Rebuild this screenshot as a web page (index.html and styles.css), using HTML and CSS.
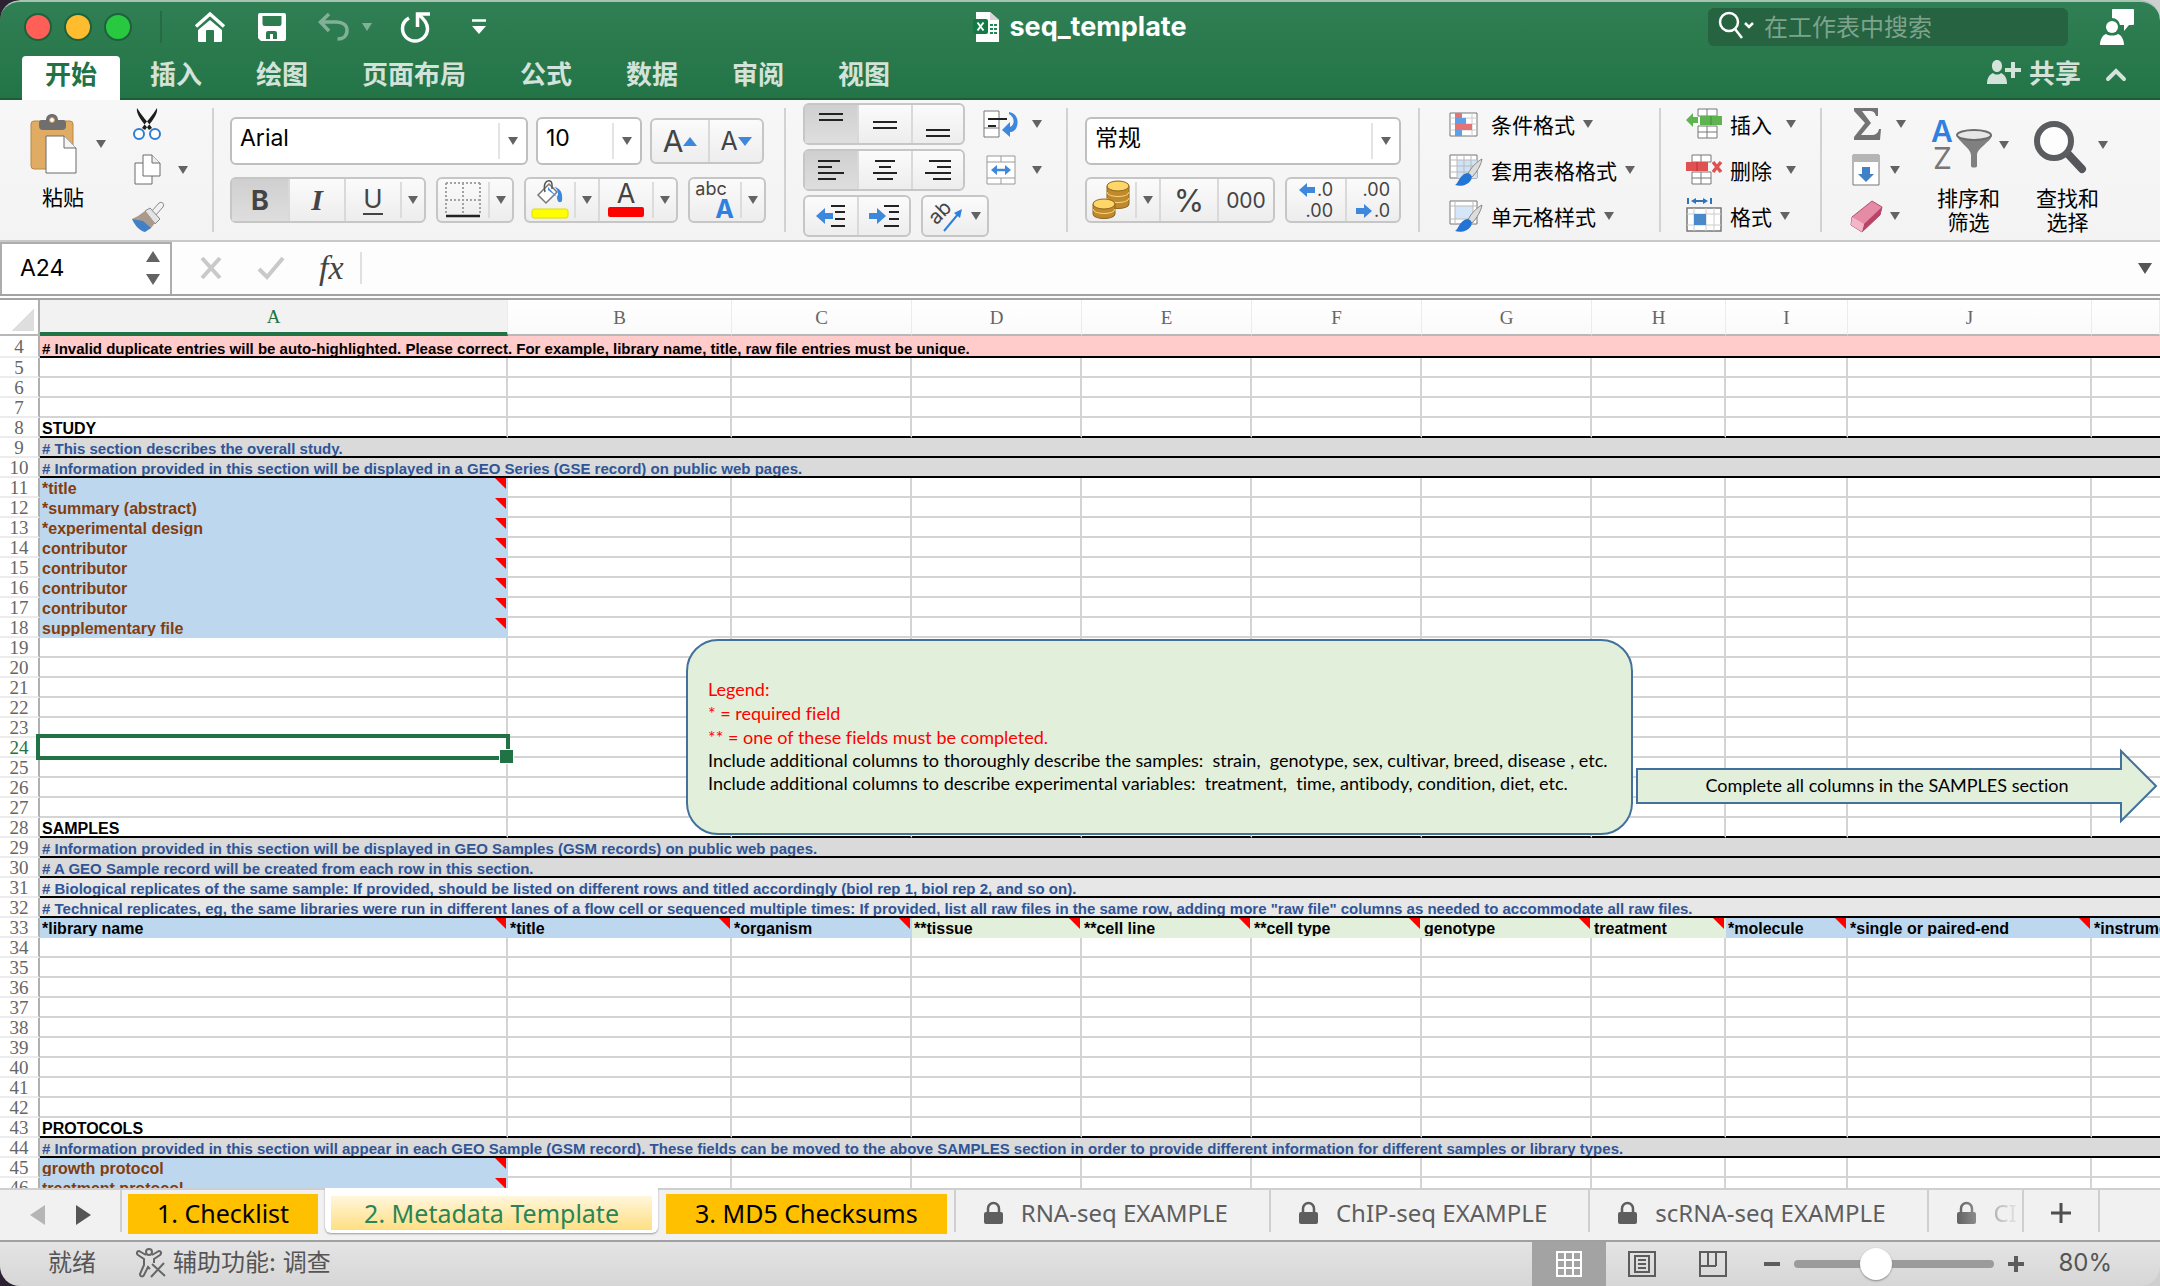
FILE: index.html
```html
<!DOCTYPE html>
<html lang="zh-CN">
<head>
  <meta charset="UTF-8">
  <meta name="viewport" content="width=device-width, initial-scale=1.0">
  <title>seq_template</title>
  <link rel="stylesheet" href="styles.css">
</head>
<body>
  <div class="window">
    <header class="header">
      <div class="titlebar">
        <div class="quick-access">
          <button class="light red" aria-label="关闭"></button>
          <button class="light yellow" aria-label="最小化"></button>
          <button class="light green" aria-label="缩放"></button>
          <span class="title-divider"></span>
          <button aria-label="主页"><svg width="32" height="32" viewBox="0 0 32 32"><path d="M2 15.500 16 3l14 12.500" fill="none" stroke="#fff" stroke-width="3.500"/><path d="M16 9 28 19v10.500a1.500 1.500 0 0 1-1.500 1.500H20V20a1 1 0 0 0-1-1h-6a1 1 0 0 0-1 1v11H5.500A1.500 1.500 0 0 1 4 29.500V19z" fill="#fff"/></svg></button>
          <button aria-label="保存"><svg width="28" height="28" viewBox="0 0 28 28"><path d="M2 0h24a2 2 0 0 1 2 2v24a2 2 0 0 1-2 2H3l-3-3V2a2 2 0 0 1 2-2zm2.500 3v8a2 2 0 0 0 2 2h15a2 2 0 0 0 2-2V3zM8 26h4v-5h3v5h4v-6a2 2 0 0 0-2-2h-7a2 2 0 0 0-2 2z" fill="#fff" fill-rule="evenodd"/></svg></button>
          <button class="undo" aria-label="撤销"><svg width="32" height="30" viewBox="0 0 32 30"><path d="M11 2 2.500 10l8.500 9M3 10h15.500c6 0 10.500 3 10.500 8.500S25 27 19.500 27" fill="none" stroke="#fff" stroke-width="3.500"/></svg><span class="caret"></span></button>
          <button class="redo" aria-label="恢复"><svg width="32" height="32" viewBox="0 0 32 32"><path d="M9 7C4.500 9.500 2.500 13 2.500 17.500c0 7 5.500 12.500 12.500 12.500s12.500-5.500 12.500-12.500c0-5.500-4-10-9-14" fill="none" stroke="#fff" stroke-width="3.500"/><path d="M17.500 16V3H30" fill="none" stroke="#fff" stroke-width="3.500"/></svg></button>
          <button class="customize" aria-label="自定义工具栏"><svg width="14" height="16" viewBox="0 0 14 16"><path d="M0 1.500h14" stroke="#fff" stroke-width="2.500"/><path d="M0 7h14l-7 8z" fill="#fff"/></svg></button>
        </div>
        <h1 class="doc-title">
          <svg width="26" height="30" viewBox="0 0 26 30"><path d="M3 0h14l9 8v22H3z" fill="#fff"/><path d="M17 0v8h9z" fill="#d5d5d5"/><path d="M17 12h3v2h-3zm4 0h3v2h-3zm-4 4h3v2h-3zm4 0h3v2h-3zm-4 4h3v2h-3zm4 0h3v2h-3z" fill="#1c8a4e"/><rect y="7" width="15" height="15" rx="2" fill="#127a43"/><path d="m4.500 10.500 6 8m0-8-6 8" stroke="#fff" stroke-width="2"/></svg>
          seq_template
        </h1>
        <div class="title-right">
          <label class="search">
            <svg width="38" height="32" viewBox="0 0 38 32"><circle cx="11" cy="11" r="9" fill="none" stroke="#fff" stroke-width="2.500"/><path d="m17 18 7 9M27 12l4 4 4-4" fill="none" stroke="#fff" stroke-width="2.500"/></svg>
            <input type="search" placeholder="在工作表中搜索" aria-label="在工作表中搜索">
          </label>
          <button aria-label="账户"><svg width="34" height="36" viewBox="0 0 34 36"><path d="M13 0h20a1 1 0 0 1 1 1v14a1 1 0 0 1-1 1h-4l-5 6v-6h-4A8 8 0 0 0 12 9V1a1 1 0 0 1 1-1z" fill="#fff"/><circle cx="12" cy="18" r="6" fill="#fff"/><path d="M0 36c0-6 3-10 6-11 3 2 9 2 12 0 3 1 6 5 6 11z" fill="#fff"/></svg></button>
        </div>
      </div>
      <nav class="tabs">
        <a class="tab active" href="#home">开始</a>
        <a class="tab" href="#insert">插入</a>
        <a class="tab" href="#draw">绘图</a>
        <a class="tab" href="#layout">页面布局</a>
        <a class="tab" href="#formulas">公式</a>
        <a class="tab" href="#data">数据</a>
        <a class="tab" href="#review">审阅</a>
        <a class="tab" href="#view">视图</a>
        <button class="share"><svg width="34" height="26" viewBox="0 0 34 26"><path d="M10 1c3 0 5 2.500 5 6s-2 6-5 6-5-2.500-5-6 2-6 5-6zM0 25c0-6 2-9 6-11 2 2 6 2 8 0 4 2 6 5 6 11z" fill="#d3e3d9"/><path d="M18 11h16M26 3v16" stroke="#d3e3d9" stroke-width="4"/></svg>共享</button>
        <button class="collapse" aria-label="折叠功能区"><svg width="22" height="14" viewBox="0 0 22 14"><path d="m3 11 8-8 8 8" fill="none" stroke="#d3e3d9" stroke-width="4" stroke-linecap="round"/></svg></button>
      </nav>
    </header>

    <section class="ribbon" aria-label="开始">
      <div class="group clipboard">
        <button class="big paste">
          <span class="icon-row"><svg width="48" height="60" viewBox="0 0 48 60"><rect x="1" y="7" width="42" height="48" rx="3" fill="#e0ab62" stroke="#b98843"/><path d="M11 6h5c0-8 12-8 12 0h5a3 3 0 0 1 3 3v3a4 4 0 0 1-4 4H13a4 4 0 0 1-4-4V9a3 3 0 0 1 2-3z" fill="#6f6f6f"/><circle cx="22" cy="6" r="2.500" fill="#fff" stroke="#c99a55"/><path d="M16 22h18l12 12v25H16z" fill="#fff" stroke="#6b6b6b"/><path d="M34 22v12h12" fill="#f4f4f4" stroke="#6b6b6b"/></svg><span class="caret"></span></span>
          <span class="label">粘贴</span>
        </button>
        <div class="stack">
          <button aria-label="剪切"><svg width="34" height="34" viewBox="0 0 34 34"><path d="M7 1c-1 5 3 11 9 18l3 4 3-2C18 15 11 8 7 1zM27 1c1 5-3 11-9 18l-3 4-3-2C16 15 23 8 27 1z" fill="#1d1d1d"/><circle cx="9" cy="27" r="5" fill="#fff" stroke="#2f7dd0" stroke-width="2"/><circle cx="25" cy="27" r="5" fill="#fff" stroke="#2f7dd0" stroke-width="2"/></svg></button>
          <button aria-label="复制"><svg width="34" height="34" viewBox="0 0 34 34"><path d="M5 10h17v21H5z" fill="#fff" stroke="#6b6b6b"/><path d="M13 2h9l8 8v13H13z" fill="#fff" stroke="#6b6b6b"/><path d="M22 2v8h8" fill="#eee" stroke="#6b6b6b"/></svg><span class="caret"></span></button>
          <button aria-label="格式刷"><svg width="34" height="34" viewBox="0 0 34 34"><path d="m21 13 8-9c3-2 6 1 4 4l-8 9z" fill="#f1f1f1" stroke="#888"/><path d="m15 12 5-3 10 11-5 5z" fill="#e3e3e3" stroke="#888"/><path d="M15 12 8 17l-6 3 13 12 6-3 4-5z" fill="#ab9a8b"/><path d="m2 20 11 2 8 7-6 4c-5-1-10-6-13-13z" fill="#3f80c6"/></svg></button>
        </div>
      </div>
      <span class="divider"></span>

      <div class="group column font-group">
        <div class="row">
          <div class="field font-name"><select aria-label="字体"><option>Arial</option></select><span class="caret"></span></div>
          <div class="field font-size"><select aria-label="字号"><option>10</option></select><span class="caret"></span></div>
          <div class="seg">
            <button class="w56" aria-label="增大字号"><span class="grow">A</span><svg width="14" height="9" viewBox="0 0 14 9"><path d="m0 9 7-9 7 9z" fill="#3d87dc"/></svg></button>
            <button class="w54" aria-label="减小字号"><span class="shrink">A</span><svg width="14" height="9" viewBox="0 0 14 9"><path d="m0 0 7 9 7-9z" fill="#3d87dc"/></svg></button>
          </div>
        </div>
        <div class="row gap10">
          <div class="seg">
            <button class="w56 pressed bold">B</button>
            <button class="w56 italic">I</button>
            <button class="w56 underline"><span>U</span></button>
            <button class="drop" aria-label="下划线选项"><span class="caret"></span></button>
          </div>
          <div class="seg">
            <button class="w50" aria-label="边框"><svg width="36" height="36" viewBox="0 0 36 36"><path d="M1 1h34M1 18h34M1 1v31M18 1v31M35 1v31" stroke="#a2a2a2" stroke-width="2" stroke-dasharray="2 2"/><path d="M1 34h34" stroke="#222" stroke-width="2.500"/></svg></button>
            <button class="drop" aria-label="边框选项"><span class="caret"></span></button>
          </div>
          <div class="seg">
            <button class="w48 raised" aria-label="填充颜色"><svg width="38" height="40" viewBox="0 0 38 40"><path d="M7 17 18 6l8 8-11 11z" fill="#fff" stroke="#777" stroke-width="1.500"/><path d="M14 14c-2-8 1-12 5-11 3 1 2 5 2 8" fill="none" stroke="#555" stroke-width="1.500"/><path d="m17 9 9 10c3-5-1-9-3-10 7 1 9 7 8 14-3 3-5 0-5-4l-9-7z" fill="#3d87dc"/><rect x="1" y="31" width="36" height="9" rx="2" fill="#ff0" stroke="#e0dc00"/></svg></button>
            <button class="drop" aria-label="填充颜色选项"><span class="caret"></span></button>
            <button class="w54 color-a raised" aria-label="字体颜色"><span>A</span><i></i></button>
            <button class="drop" aria-label="字体颜色选项"><span class="caret"></span></button>
          </div>
          <div class="seg">
            <button class="w50 phonetic" aria-label="拼音指南"><span>abc</span><b>A</b></button>
            <button class="drop" aria-label="拼音选项"><span class="caret"></span></button>
          </div>
        </div>
      </div>
      <span class="divider"></span>

      <div class="group column align-group">
        <div class="row gap18">
          <div class="seg small">
            <button class="w52 pressed" aria-label="顶端对齐"><svg width="26" height="30" viewBox="0 0 26 30"><path d="M1 5h24M1 11h24" stroke="#222" stroke-width="2"/></svg></button>
            <button class="w54" aria-label="垂直居中"><svg width="26" height="30" viewBox="0 0 26 30"><path d="M1 13h24M1 19h24" stroke="#222" stroke-width="2"/></svg></button>
            <button class="w52" aria-label="底端对齐"><svg width="26" height="30" viewBox="0 0 26 30"><path d="M1 21h24M1 27h24" stroke="#222" stroke-width="2"/></svg></button>
          </div>
          <button class="with-caret" aria-label="自动换行"><svg width="36" height="34" viewBox="0 0 36 34"><path d="M1 4h15v26H1zM1 21h15" fill="#fff" stroke="#777"/><path d="M5 12h19M5 19h8" stroke="#222" stroke-width="2"/><path d="M26 5c7 1 10 8 8 14-1 4-4 6-7 6v5l-8-7 8-8v5c5-2 5-10-1-13z" fill="#3d87dc"/></svg><span class="caret"></span></button>
        </div>
        <div class="row gap18">
          <div class="seg small">
            <button class="w52 pressed" aria-label="左对齐"><svg width="26" height="22" viewBox="0 0 26 22"><path d="M0 2h22M0 8h14M0 14h26M0 20h18" stroke="#222" stroke-width="2"/></svg></button>
            <button class="w54" aria-label="居中"><svg width="26" height="22" viewBox="0 0 26 22"><path d="M3 2h20M7 8h12M1 14h24M5 20h16" stroke="#222" stroke-width="2"/></svg></button>
            <button class="w52" aria-label="右对齐"><svg width="26" height="22" viewBox="0 0 26 22"><path d="M4 2h22M12 8h14M0 14h26M8 20h18" stroke="#222" stroke-width="2"/></svg></button>
          </div>
          <button class="with-caret" aria-label="合并后居中"><svg width="36" height="30" viewBox="0 0 36 30"><path d="M4 1h28v28H4zM4 7h28M4 23h28M18 1v6M18 23v6" fill="#fff" stroke="#999"/><path d="M13 15h10" stroke="#3d87dc" stroke-width="2.500"/><path d="m8 15 6-5v10zM28 15l-6-5v10z" fill="#3d87dc"/></svg><span class="caret"></span></button>
        </div>
        <div class="row gap10">
          <div class="seg small">
            <button class="w52" aria-label="减少缩进"><svg width="32" height="24" viewBox="0 0 32 24"><path d="M16 2h14M20 8h10M20 15h10M16 22h14" stroke="#222" stroke-width="2"/><path d="m1 12 9-8v5h8v6h-8v5z" fill="#3d87dc"/></svg></button>
            <button class="w52" aria-label="增加缩进"><svg width="32" height="24" viewBox="0 0 32 24"><path d="M16 2h15M21 8h10M21 15h10M16 22h15" stroke="#222" stroke-width="2"/><path d="m18 12-9-8v5H1v6h8v5z" fill="#3d87dc"/></svg></button>
          </div>
          <div class="seg small">
            <button class="w64 with-caret orient" aria-label="方向"><svg width="36" height="34" viewBox="0 0 36 34"><text x="2" y="22" transform="rotate(-45 10 18)" font-size="20" fill="#444">ab</text><path d="m15 32 15-18" stroke="#2f80d8" stroke-width="2"/><path d="m33 10-2 9-6-5z" fill="#2f80d8"/></svg><span class="caret"></span></button>
          </div>
        </div>
      </div>
      <span class="divider"></span>

      <div class="group column number-group">
        <div class="row">
          <div class="field wide"><select aria-label="数字格式"><option>常规</option></select><span class="caret"></span></div>
        </div>
        <div class="row gap10">
          <div class="seg">
            <button class="w48" aria-label="会计数字格式"><svg width="38" height="42" viewBox="0 0 38 42"><g stroke="#8d6420"><path d="M15 7v18c0 6 22 6 22 0V7z" fill="#c08a2c"/><path d="M15 13c0 6 22 6 22 0M15 19c0 6 22 6 22 0" fill="none" stroke="#f6d67c"/><ellipse cx="26" cy="7" rx="11" ry="5" fill="#ffd768"/><path d="M1 25v10c0 6 22 6 22 0V25z" fill="#c08a2c"/><path d="M1 30c0 6 22 6 22 0" fill="none" stroke="#f6d67c"/><ellipse cx="12" cy="25" rx="11" ry="5" fill="#ffd768"/></g></svg></button>
            <button class="drop" aria-label="货币选项"><span class="caret"></span></button>
            <button class="w58 percent">%</button>
            <button class="w56 thousand">000</button>
          </div>
          <div class="seg">
            <button class="w58 decimal"><span><svg width="16" height="14" viewBox="0 0 16 14"><path d="m0 7 8-7v4h8v6H8v4z" fill="#3d87dc"/></svg>.0</span><span>.00</span></button>
            <button class="w54 decimal"><span>.00</span><span><svg width="16" height="14" viewBox="0 0 16 14"><path d="M16 7 8 0v4H0v6h8v4z" fill="#3d87dc"/></svg>.0</span></button>
          </div>
        </div>
      </div>
      <span class="divider"></span>

      <div class="group styles-group">
        <div class="stack">
          <button><svg width="34" height="34" viewBox="0 0 34 34"><path d="M1 6h27v23H1z" fill="#fff" stroke="#777"/><path d="M1 11h27M1 17h27M1 23h27M23 6v23" stroke="#ccc"/><path d="M6 6h7v5H6zM6 17h17v6H6z" fill="#e57373"/><path d="M6 11h11v6H6zM6 23h7v6H6z" fill="#5ba0e8"/></svg>条件格式<span class="caret"></span></button>
          <button><svg width="34" height="34" viewBox="0 0 34 34"><path d="M1 2h27v23H1z" fill="#fff" stroke="#777"/><path d="M8 7h20v18H8z" fill="#cfe2f6"/><path d="M1 7h27M1 13h27M1 19h27M8 2v23M15 2v23M22 2v23" stroke="#bbb"/><path d="M33 6C27 9 21 16 19 21l4 3c5-5 9-12 10-18z" fill="#ddd" stroke="#888"/><path d="M18 20c4 0 6 4 4 7-3 5-10 7-16 5 4-2 4-10 12-12z" fill="#2474d6"/></svg>套用表格格式<span class="caret"></span></button>
          <button><svg width="34" height="34" viewBox="0 0 34 34"><path d="M1 2h27v23H1z" fill="#fff" stroke="#777"/><path d="M6 7h18v13H6z" fill="#d5e6f8"/><path d="M1 7h27M1 20h27M6 2v23M24 2v23" stroke="#bbb"/><path d="M33 6C27 9 21 16 19 21l4 3c5-5 9-12 10-18z" fill="#ddd" stroke="#888"/><path d="M18 20c4 0 6 4 4 7-3 5-10 7-16 5 4-2 4-10 12-12z" fill="#2474d6"/></svg>单元格样式<span class="caret"></span></button>
        </div>
      </div>
      <span class="divider"></span>

      <div class="group cells-group">
        <div class="stack">
          <button><svg width="36" height="34" viewBox="0 0 36 34"><path d="M12 2h19v7H12zM12 19h19v12H12zM21 2v7M21 19v12M12 25h19" fill="#fff" stroke="#777"/><path d="M14 9h22v9H14zM0 13l7-7v4h5v6H7v4z" fill="#5fb350"/><path d="M25 9v9" stroke="#3e9130"/></svg>插入<span class="caret far"></span></button>
          <button><svg width="36" height="34" viewBox="0 0 36 34"><path d="M6 2h19v7H6zM6 19h19v12H6zM15 2v7M15 19v12M6 25h19" fill="#fff" stroke="#777"/><path d="M0 9h22v9H0z" fill="#e05252"/><path d="M11 9v9" stroke="#b83232"/><path d="m27 9 8 10m0-10-8 10" stroke="#e05252" stroke-width="3.500"/></svg>删除<span class="caret far"></span></button>
          <button><svg width="36" height="36" viewBox="0 0 36 36"><path d="M2 0v6M25 0v6M8 3h12" stroke="#2d74b8" stroke-width="2"/><path d="m5 3 5-3v6zM22 3l-5-3v6z" fill="#2d74b8"/><path d="M1 10h34v23H1z" fill="#fff" stroke="#777" stroke-width="1.500"/><path d="M1 16h34M1 27h34M8 10v23M20 10v23M28 10v23" stroke="#ccc"/><path d="M8 16h12v11H8z" fill="#4a8acb"/></svg>格式<span class="caret"></span></button>
        </div>
      </div>
      <span class="divider"></span>

      <div class="group edit-group">
        <div class="stack">
          <button aria-label="自动求和"><svg width="32" height="34" viewBox="0 0 32 34"><path d="M4 1h24v8h-2c-1-4-3-5-7-5h-7l9 12-10 12h10c5 0 7-2 8-6h2l-1 11H4v-3l11-14L4 4z" fill="#737373"/></svg><span class="caret far"></span></button>
          <button aria-label="填充"><svg width="32" height="32" viewBox="0 0 32 32"><path d="M3 1h26v30H3z" fill="#fff" stroke="#777"/><path d="M3 1h26v7H3z" fill="#b5b5b5"/><path d="M12 13h8v7h4l-8 8-8-8h4z" fill="#3f80c6"/></svg><span class="caret"></span></button>
          <button aria-label="清除"><svg width="32" height="34" viewBox="0 0 32 34"><path d="M22 2 32 8l-2 8-18 17L1 26l1-8z" fill="#e58ba5" stroke="#b34d6c"/><path d="m12 33 2-8L32 8l-2 8z" fill="#b9446a"/><path d="m2 18 12 7-2 8-11-7z" fill="#f3b6c6"/></svg><span class="caret"></span></button>
        </div>
        <button class="big sort">
          <span class="icon-row"><svg width="62" height="60" viewBox="0 0 62 60"><text x="0" y="27" font-size="30" font-weight="600" fill="#2f80e0">A</text><text x="2" y="54" font-size="30" fill="#777">Z</text><path d="M26 20c0 6 14 13 14 20v11c0 2 6 2 6 0V40c0-7 15-14 15-20z" fill="#808080"/><ellipse cx="43" cy="20" rx="17" ry="5" fill="#e6e6e6" stroke="#6c6c6c" stroke-width="2"/></svg><span class="caret"></span></span>
          <span class="label">排序和<br>筛选</span>
        </button>
        <button class="big find">
          <span class="icon-row"><svg width="52" height="60" viewBox="0 0 52 60"><path d="m34 39 14 15" stroke="#55565a" stroke-width="8" stroke-linecap="round"/><circle cx="20" cy="26" r="17" fill="#fdfdfd" stroke="#5b5c60" stroke-width="6"/></svg><span class="caret"></span></span>
          <span class="label">查找和<br>选择</span>
        </button>
      </div>
    </section>

    <section class="formula-bar">
      <div class="name-box">
        <input type="text" value="A24" aria-label="名称框">
        <span class="spin"><i class="up"></i><i class="down"></i></span>
      </div>
      <button aria-label="取消"><svg width="24" height="24" viewBox="0 0 24 24"><path d="m3 2 18 20M21 2 3 22" stroke="#c9c9c9" stroke-width="4"/></svg></button>
      <button aria-label="输入"><svg width="28" height="24" viewBox="0 0 28 24"><path d="m2 13 8 8L26 2" fill="none" stroke="#c9c9c9" stroke-width="4"/></svg></button>
      <button class="fx"><i>fx</i></button>
      <input class="formula" type="text" aria-label="编辑栏">
      <button class="expand" aria-label="展开编辑栏"></button>
    </section>

    <main class="sheet">
      <table class="grid">
        <colgroup>
          <col class="c-head"><col class="c-a"><col class="c-b"><col class="c-c"><col class="c-mid"><col class="c-mid"><col class="c-mid"><col class="c-mid"><col class="c-h"><col class="c-i"><col class="c-j"><col>
        </colgroup>
        <thead>
          <tr>
            <th class="corner"></th>
            <th scope="col" class="current">A</th>
            <th scope="col">B</th>
            <th scope="col">C</th>
            <th scope="col">D</th>
            <th scope="col">E</th>
            <th scope="col">F</th>
            <th scope="col">G</th>
            <th scope="col">H</th>
            <th scope="col">I</th>
            <th scope="col">J</th>
            <th scope="col"></th>
          </tr>
        </thead>
        <tbody id="rows"></tbody>
      </table>

      <div class="legend">
        <p class="required">Legend:</p>
        <p class="required">* = required field</p>
        <p class="required">** = one of these fields must be completed.</p>
        <p>Include additional columns to thoroughly describe the samples:&nbsp; strain,&nbsp; genotype, sex, cultivar, breed, disease , etc.</p>
        <p>Include additional columns to describe experimental variables:&nbsp; treatment,&nbsp; time, antibody, condition, diet, etc.</p>
      </div>
      <div class="arrow">
        <svg width="522" height="74" viewBox="0 0 522 74"><path d="M1 20h484V2l35 35-35 35V54H1z" fill="#e2efda" stroke="#41719c" stroke-width="2"/></svg>
        <p>Complete all columns in the SAMPLES section</p>
      </div>
    </main>

    <nav class="sheet-tabs">
      <div class="scroll">
        <button class="prev" aria-label="上一张"></button>
        <button class="next" aria-label="下一张"></button>
      </div>
      <button class="sheet-tab colored">1. Checklist</button>
      <button class="sheet-tab selected"><span>2. Metadata Template</span></button>
      <button class="sheet-tab colored">3. MD5 Checksums</button>
      <button class="sheet-tab locked"><svg width="19" height="22" viewBox="0 0 19 22"><path d="M4 11V6.500a5.500 5.500 0 0 1 11 0V11" fill="none" stroke="#5e5e5e" stroke-width="2.500"/><rect y="10" width="19" height="12" rx="2" fill="#5e5e5e"/></svg>RNA-seq EXAMPLE</button>
      <button class="sheet-tab locked"><svg width="19" height="22" viewBox="0 0 19 22"><path d="M4 11V6.500a5.500 5.500 0 0 1 11 0V11" fill="none" stroke="#5e5e5e" stroke-width="2.500"/><rect y="10" width="19" height="12" rx="2" fill="#5e5e5e"/></svg>ChIP-seq EXAMPLE</button>
      <button class="sheet-tab locked"><svg width="19" height="22" viewBox="0 0 19 22"><path d="M4 11V6.500a5.500 5.500 0 0 1 11 0V11" fill="none" stroke="#5e5e5e" stroke-width="2.500"/><rect y="10" width="19" height="12" rx="2" fill="#5e5e5e"/></svg>scRNA-seq EXAMPLE</button>
      <button class="sheet-tab locked fading"><svg width="19" height="22" viewBox="0 0 19 22"><path d="M4 11V6.500a5.500 5.500 0 0 1 11 0V11" fill="none" stroke="#5e5e5e" stroke-width="2.500"/><rect y="10" width="19" height="12" rx="2" fill="#5e5e5e"/></svg>CI</button>
      <button class="add-sheet" aria-label="插入工作表"><svg width="20" height="20" viewBox="0 0 20 20"><path d="M0 10h20M10 0v20" stroke="#4f4f4f" stroke-width="3"/></svg></button>
    </nav>

    <footer class="status">
      <span>就绪</span>
      <button class="a11y"><svg width="30" height="30" viewBox="0 0 30 30"><g fill="none" stroke="#666" stroke-width="2"><circle cx="13" cy="4" r="3"/><path d="M10 7 3 3C1 3 0 5 2 7l6 4v6L4 26c0 3 3 3 4 1l4-8 2 2M16 7l7-4c2 0 3 2 1 4l-6 4v4M16 16l13 12M28 15 15 29"/></g></svg>辅助功能: 调查</button>
      <div class="views">
        <button class="view on" aria-label="普通"><svg width="26" height="26" viewBox="0 0 26 26"><path d="M1 1h24v24H1zM9 1v24M17 1v24M1 9h24M1 17h24" fill="none" stroke="#fff" stroke-width="2"/></svg></button>
        <button class="view" aria-label="页面布局"><svg width="28" height="26" viewBox="0 0 28 26"><path d="M1 1h26v24H1zM7 5h14v16H7zM10 9h8M10 13h8M10 17h8" fill="none" stroke="#5c5c5c" stroke-width="2"/></svg></button>
        <button class="view" aria-label="分页预览"><svg width="28" height="26" viewBox="0 0 28 26"><path d="M1 1h26v24H1zM9 1v14M17 1v14M1 15h16" fill="none" stroke="#5c5c5c" stroke-width="2"/></svg></button>
      </div>
      <button class="zoom-step" aria-label="缩小"><svg width="16" height="16" viewBox="0 0 16 16"><path d="M0 8h16" stroke="#5c5c5c" stroke-width="4"/></svg></button>
      <input class="zoom" type="range" min="0" max="100" value="39" aria-label="显示比例">
      <button class="zoom-step" aria-label="放大"><svg width="16" height="16" viewBox="0 0 16 16"><path d="M0 8h16M8 0v16" stroke="#5c5c5c" stroke-width="4"/></svg></button>
      <span class="percent-label">80%</span>
    </footer>
  </div>
  <script src="script.js"></script>
</body>
</html>
```
FILE: styles.css
```css
* {
  box-sizing: border-box;
}

body {
  margin: 0;
  height: 100vh;
  overflow: hidden;
  background: linear-gradient(90deg, #2b2133 0, #2b2133 30px, #cfcfcf 60px);
  font-family: Inter, "Noto Sans CJK SC", sans-serif;
  color: #000;
}

button,
input,
select {
  font: inherit;
  color: inherit;
  background: none;
  border: 0;
  padding: 0;
  margin: 0;
}

svg {
  display: block;
  flex: none;
  overflow: visible;
}

.window {
  display: flex;
  flex-direction: column;
  height: 100%;
  border-radius: 20px;
  overflow: hidden;
}

/* Title bar and tabs */
.header {
  height: 100px;
  border-top: 2px solid #a5c4b2;
  border-radius: 20px 20px 0 0;
  background: linear-gradient(#317f54, #227447);
  box-shadow: inset 0 -2px #1b5e38;
}

.titlebar {
  display: grid;
  grid-template-columns: 1fr auto 1fr;
  height: 50px;
  align-items: center;
}

.quick-access {
  display: flex;
  align-items: center;
  padding-left: 26px;
}

.light {
  width: 24px;
  height: 24px;
  border-radius: 50%;
  margin-right: 16px;
  box-shadow: 0 0 0 2px rgba(20, 80, 45, 0.6);
}

.red { background: #ff5f57; }
.yellow { background: #febc2e; }
.green { background: #28c840; }

.title-divider {
  width: 2px;
  height: 32px;
  margin-right: 32px;
  background: #276b45;
  margin-left: 14px;
}

.quick-access button + button:not(.light) {
  margin-left: 32px;
}

.undo {
  display: flex;
  align-items: center;
  gap: 12px;
  opacity: 0.4;
}

.quick-access button.redo:not(.light) {
  margin-left: 28px;
}

.quick-access button.customize:not(.light) {
  margin-left: 40px;
}

.undo .caret {
  border-top-color: #fff;
}

.doc-title {
  display: flex;
  align-items: center;
  gap: 10px;
  margin: 0;
  font-size: 27px;
  font-weight: 700;
  line-height: 34px;
  color: #fff;
}

.title-right {
  display: flex;
  justify-content: flex-end;
  align-items: center;
  gap: 32px;
  padding-right: 26px;
}

.search {
  display: flex;
  align-items: center;
  gap: 8px;
  width: 360px;
  height: 38px;
  padding: 0 10px;
  border-radius: 6px;
  background: #266341;
}

.search input {
  flex: 1;
  min-width: 0;
  font-size: 24px;
  outline: 0;
}

.search input::placeholder {
  color: #7da38d;
}

.tabs {
  display: flex;
  align-items: flex-end;
  height: 48px;
  padding-left: 22px;
}

.tab {
  height: 44px;
  padding: 0 27px;
  line-height: 38px;
  font-size: 26px;
  font-weight: 700;
  color: #d3e3d9;
  text-decoration: none;
}

.tab.active {
  margin-right: 3px;
  padding: 0 23px;
  border-radius: 4px 4px 0 0;
  background: #fff;
  color: #217346;
}

.share {
  display: flex;
  align-items: center;
  gap: 8px;
  height: 44px;
  margin-left: auto;
  padding-bottom: 13px;
  font-size: 26px;
  font-weight: 700;
  color: #d3e3d9;
}

.collapse {
  height: 44px;
  padding: 0 33px 6px 24px;
}

/* Ribbon */
.ribbon {
  display: flex;
  align-items: center;
  height: 142px;
  border-bottom: 2px solid #c8c8c8;
  background: linear-gradient(#f7f7f7, #f3f3f3);
  font-size: 21px;
}

.divider {
  flex: none;
  width: 2px;
  height: 124px;
  background: #d2d2d2;
}

.group {
  display: flex;
  height: 140px;
}

.column {
  flex-direction: column;
  justify-content: center;
  gap: 12px;
}

.row {
  display: flex;
  align-items: center;
  gap: 8px;
}

.gap10 { gap: 10px; }
.gap18 { gap: 18px; }

.caret {
  flex: none;
  width: 10px;
  height: 8px;
  border: 5px solid transparent;
  border-top: 8px solid #636363;
  border-bottom: 0;
}

.clipboard {
  gap: 24px;
  padding: 0 24px 0 30px;
}

.font-group { padding: 0 18px 0 16px; }
.number-group { padding: 0 17px; }
.styles-group { padding: 0 24px 0 29px; }
.cells-group { padding: 0 24px 0 25px; }

.align-group {
  gap: 4px;
  padding: 0 24px 0 17px;
}

.edit-group {
  gap: 25px;
  padding-left: 28px;
}

.stack {
  display: flex;
  flex-direction: column;
  justify-content: center;
}

.stack button {
  display: flex;
  align-items: center;
  gap: 8px;
  height: 46px;
}

.stack .caret.far {
  margin-left: 6px;
}

.clipboard .stack button {
  gap: 14px;
}

.big {
  display: flex;
  flex-direction: column;
  align-items: flex-start;
  gap: 12px;
  padding-top: 14px;
}

.icon-row {
  display: flex;
  align-items: center;
  gap: 6px;
}

.big .label {
  padding-left: 6px;
  line-height: 24px;
}

.sort,
.find {
  padding-top: 15px;
}

.paste .icon-row { gap: 18px; }
.paste .label { padding-left: 12px; }
.find .icon-row { gap: 12px; }
.find .label { padding-left: 2px; }

.field {
  position: relative;
  height: 48px;
  border: 2px solid #bfbfbf;
  border-radius: 6px;
  background: #fff;
}

.field select {
  appearance: none;
  width: 100%;
  height: 38px;
  padding-left: 8px;
  font-size: 23px;
}

.field::after {
  content: "";
  position: absolute;
  top: 4px;
  right: 26px;
  width: 2px;
  height: 36px;
  background: #e4e4e4;
}

.field .caret {
  position: absolute;
  top: 18px;
  right: 8px;
}

.font-name { width: 298px; }
.font-size { width: 106px; }
.wide { width: 316px; }

.seg {
  display: flex;
  height: 46px;
  border: 2px solid #c6c6c6;
  border-radius: 6px;
  background: linear-gradient(#fbfbfb, #ededed);
}

.seg.small {
  height: 42px;
}

.seg button {
  display: flex;
  align-items: center;
  justify-content: center;
  color: #444;
}

.seg button + button:not(.drop) {
  border-left: 2px solid #d9d9d9;
}

.seg .pressed {
  background: linear-gradient(#cfcfcf, #dedede);
}

.seg .drop {
  align-self: center;
  width: 24px;
  height: 36px;
  border-left: 2px solid #dcdcdc;
}

.seg .raised {
  padding-bottom: 4px;
}

.w48 { width: 48px; }
.w50 { width: 50px; }
.w52 { width: 52px; }
.w54 { width: 54px; }
.w56 { width: 56px; }
.w58 { width: 58px; }
.w64 { width: 64px; }

.grow { font-size: 30px; }
.shrink { font-size: 25px; }

.seg .bold {
  font-size: 27px;
  font-weight: 700;
}

.seg .italic {
  font-family: "Liberation Serif", serif;
  font-style: italic;
  font-weight: 700;
  font-size: 30px;
}

.underline span {
  font-size: 26px;
  line-height: 28px;
  border-bottom: 2px solid #444;
}

.seg .color-a,
.seg .phonetic,
.seg .decimal {
  flex-direction: column;
}

.color-a span {
  font-size: 27px;
  line-height: 27px;
}

.color-a i {
  width: 36px;
  height: 10px;
  border-radius: 2px;
  background: #f00;
}

.phonetic span {
  font-size: 18px;
  line-height: 18px;
  padding-right: 8px;
}

.phonetic b {
  align-self: flex-end;
  padding-right: 6px;
  font-size: 25px;
  line-height: 22px;
  color: #2f80e0;
}

.with-caret {
  display: flex;
  align-items: center;
  gap: 13px;
}

.seg .orient {
  gap: 6px;
}

.seg .percent { font-size: 31px; }
.seg .thousand { font-size: 21px; }

.decimal span {
  display: flex;
  align-items: center;
  justify-content: flex-end;
  gap: 2px;
  width: 34px;
  font-size: 18px;
  line-height: 21px;
}

/* Formula bar */
.formula-bar {
  display: flex;
  align-items: center;
  height: 58px;
  border-bottom: 6px double #a3a3a3;
  background: #fdfdfd;
}

.name-box {
  display: flex;
  align-items: center;
  width: 172px;
  height: 52px;
  margin-right: 27px;
  padding: 0 10px 2px 18px;
  border: 2px solid #adadad;
  border-bottom: 0;
  background: #fff;
}

.name-box input {
  flex: 1;
  min-width: 0;
  font-size: 23px;
}

.spin {
  display: flex;
  flex-direction: column;
  gap: 12px;
}

.spin i {
  border: 7px solid transparent;
}

.spin .up {
  border-top: 0;
  border-bottom: 11px solid #636363;
}

.spin .down {
  border-bottom: 0;
  border-top: 11px solid #636363;
}

.formula-bar > button + button {
  margin-left: 34px;
}

.fx {
  padding-right: 16px;
  border-right: 2px solid #e0e0e0;
  font-family: "Liberation Serif", serif;
  font-size: 34px;
  line-height: 32px;
  color: #444;
}

.formula {
  flex: 1;
  font-size: 23px;
  padding-left: 14px;
}

.expand {
  width: 14px;
  height: 11px;
  margin-right: 8px;
  border: 7px solid transparent;
  border-top: 11px solid #555;
  border-bottom: 0;
}

/* Worksheet */
.sheet {
  position: relative;
  flex: 1;
  min-height: 0;
  overflow: hidden;
  background: #fff;
}

.grid {
  width: 100%;
  table-layout: fixed;
  border-spacing: 0;
}

.c-head { width: 40px; }
.c-a { width: 468px; }
.c-b { width: 224px; }
.c-c { width: 180px; }
.c-mid { width: 170px; }
.c-h { width: 134px; }
.c-i { width: 122px; }
.c-j { width: 244px; }

.grid th {
  padding: 0;
  font-family: "Liberation Serif", serif;
  font-weight: 400;
  font-size: 19px;
  color: #666;
}

.grid thead th {
  height: 36px;
  padding-top: 2px;
  border-right: 1px solid #ececec;
  border-bottom: 2px solid #b8b8b8;
  background: linear-gradient(#fff, #fafafa);
}

.grid thead .current {
  border-bottom: 4px solid #217346;
  background: #f2f2f2;
  color: #217346;
}

.grid thead .corner {
  border-right: 2px solid #b0b0b0;
  background:
    linear-gradient(135deg, transparent 50%, #dedede 50%) 12px 9px / 22px 22px no-repeat;
}

.grid tbody th {
  height: 20px;
  padding-top: 2px;
  border-right: 2px solid #b0b0b0;
  border-bottom: 2px solid #ececec;
  line-height: 16px;
}

.grid td {
  position: relative;
  height: 20px;
  padding: 0 0 0 2px;
  border-right: 2px solid #d4d4d4;
  border-bottom: 2px solid #d4d4d4;
  font-family: "Liberation Sans", Arial, sans-serif;
  font-weight: 700;
  font-size: 16px;
  white-space: nowrap;
  vertical-align: bottom;
}

.grid td:last-child {
  border-right: 0;
}

.grid td span {
  display: block;
  height: 18px;
  line-height: 21px;
  overflow: hidden;
}

.grid .tall th,
.grid .tall td {
  height: 22px;
}

.grid .notice td,
.grid .note td {
  border-bottom-color: #000;
  font-size: 15px;
}

.grid .notice td {
  background: #ffcccb;
}

.grid .note td {
  background: #dadada;
  color: #2f5597;
}

.grid .light-note td {
  background: #e7e7e7;
}

.grid .section td {
  border-bottom-color: #000;
}

.grid .blue {
  border-color: #bdd7ee;
  background: #bdd7ee;
}

.grid .pale {
  border-color: #e2efda;
  background: #e2efda;
}

.grid .field-name {
  color: #843c0c;
}

.grid .comment::after {
  content: "";
  position: absolute;
  top: 0;
  right: 0;
  width: 11px;
  height: 11px;
  background: #f00;
  clip-path: polygon(0 0, 100% 0, 100% 100%);
}

.grid .comment:last-child::after {
  display: none;
}

.grid .active-row th {
  color: #217346;
}

.grid .cursor::before {
  content: "";
  position: absolute;
  z-index: 1;
  inset: -4px;
  border: 4px solid #217346;
}

.grid .cursor::after {
  content: "";
  position: absolute;
  z-index: 2;
  right: -8px;
  bottom: -8px;
  width: 13px;
  height: 13px;
  border: 1px solid #fff;
  background: #217346;
}

/* Shapes placed on the worksheet */
.legend {
  position: absolute;
  left: 686px;
  top: 339px;
  width: 947px;
  height: 196px;
  padding: 36px 20px 0;
  border: 2px solid #41719c;
  border-radius: 32px;
  background: #e2efda;
  font-family: Lato, sans-serif;
  font-size: 18px;
  font-variant-ligatures: none;
  line-height: 23px;
  white-space: nowrap;
}

.legend p,
.arrow p {
  margin: 0;
}

.legend .required {
  line-height: 24px;
  color: #f00;
}

.arrow {
  position: absolute;
  left: 1636px;
  top: 449px;
  width: 522px;
  height: 74px;
}

.arrow p {
  position: absolute;
  inset: 0 20px 0 0;
  font-family: Lato, sans-serif;
  font-size: 18px;
  font-variant-ligatures: none;
  line-height: 72px;
  text-align: center;
}

/* Sheet tabs */
.sheet-tabs {
  display: flex;
  align-items: flex-start;
  height: 54px;
  border-top: 2px solid #cfcfcf;
  border-bottom: 2px solid #a0a0a0;
  background: #f1f1f1;
  font-family: "Noto Sans", sans-serif;
  font-size: 24px;
}

.scroll {
  display: flex;
  align-items: center;
  gap: 31px;
  width: 122px;
  height: 42px;
  margin-right: 6px;
  padding: 8px 0 0 30px;
  border-right: 2px solid #cfcfcf;
}

.prev,
.next {
  border: 10px solid transparent;
}

.prev {
  border-left: 0;
  border-right: 15px solid #b5b5b5;
}

.next {
  border-right: 0;
  border-left: 15px solid #555;
}

.sheet-tab {
  display: flex;
  align-items: center;
  height: 42px;
  color: #5e5e5e;
  white-space: nowrap;
}

.colored {
  height: 40px;
  margin-top: 4px;
  margin-right: 7px;
  padding: 0 29px 2px;
  background: #ffc000;
  font-size: 25px;
  color: #000;
}

.selected {
  height: 45px;
  margin-top: -2px;
  margin-right: 8px;
  padding: 8px 6px 4px;
  border-radius: 0 0 6px 6px;
  background: #fff;
  box-shadow: 0 1px 2px #999;
  font-size: 25px;
  color: #2a8455;
}

.selected span {
  padding: 0 33px;
  line-height: 34px;
  background: linear-gradient(#fff6dc, #ffdf82);
}

.locked {
  gap: 18px;
  padding: 3px 41px 0 28px;
  border-left: 2px solid #cfcfcf;
}

.fading {
  flex: 1 1 0;
  min-width: 0;
  padding-right: 0;
  overflow: hidden;
  -webkit-mask-image: linear-gradient(90deg, #000 30%, transparent);
  mask-image: linear-gradient(90deg, #000 30%, transparent);
}

.add-sheet {
  display: flex;
  align-items: center;
  justify-content: center;
  width: 78px;
  height: 42px;
  margin-right: 60px;
  padding-top: 4px;
  border: solid #cfcfcf;
  border-width: 0 2px;
}

/* Status bar */
.status {
  display: flex;
  align-items: center;
  height: 44px;
  padding: 0 48px;
  background: linear-gradient(#e4e4e4, #d6d6d6);
  font-size: 24px;
  line-height: 40px;
  color: #555;
}

.status > span,
.a11y {
  padding-bottom: 2px;
}

.a11y {
  display: flex;
  align-items: center;
  gap: 7px;
  margin-left: 40px;
}

.views {
  display: flex;
  align-self: stretch;
  margin: 0 16px 0 auto;
}

.view {
  display: flex;
  align-items: center;
  justify-content: center;
  width: 71px;
}

.view.on {
  width: 74px;
  background: #a3a3a3;
}

.zoom {
  appearance: none;
  width: 200px;
  height: 8px;
  margin: 0 14px;
  border-radius: 4px;
  background: #9b9b9b;
}

.zoom::-webkit-slider-thumb {
  appearance: none;
  width: 32px;
  height: 32px;
  border-radius: 50%;
  background: #fff;
  box-shadow: 0 1px 2px #888;
}

.percent-label {
  margin-left: 34px;
}
```
FILE: script.js
```js
const COLUMNS = 11;

// Rows that span the whole sheet
const wide = {
  4: ['notice tall', '# Invalid duplicate entries will be auto-highlighted. Please correct. For example, library name, title, raw file entries must be unique.'],
  9: ['note', '# This section describes the overall study.'],
  10: ['note', '# Information provided in this section will be displayed in a GEO Series (GSE record) on public web pages.'],
  29: ['note', '# Information provided in this section will be displayed in GEO Samples (GSM records) on public web pages.'],
  30: ['note', '# A GEO Sample record will be created from each row in this section.'],
  31: ['note light-note', '# Biological replicates of the same sample: If provided, should be listed on different rows and titled accordingly (biol rep 1, biol rep 2, and so on).'],
  32: ['note light-note', '# Technical replicates, eg, the same libraries were run in different lanes of a flow cell or sequenced multiple times: If provided, list all raw files in the same row, adding more "raw file" columns as needed to accommodate all raw files.'],
  44: ['note', '# Information provided in this section will appear in each GEO Sample (GSM record). These fields can be moved to the above SAMPLES section in order to provide different information for different samples or library types.']
};

const sections = { 8: 'STUDY', 28: 'SAMPLES', 43: 'PROTOCOLS' };

const fields = {
  11: '*title',
  12: '*summary (abstract)',
  13: '*experimental design',
  14: 'contributor',
  15: 'contributor',
  16: 'contributor',
  17: 'contributor',
  18: 'supplementary file',
  45: 'growth protocol',
  46: 'treatment protocol'
};

const sampleHeads = ['*library name', '*title', '*organism', '**tissue', '**cell line', '**cell type', 'genotype', 'treatment', '*molecule', '*single or paired-end', '*instrument model'];

const tbody = document.getElementById('rows');

function addCell(tr, text, className) {
  const td = tr.insertCell();
  if (className) td.className = className;
  if (text) {
    const span = document.createElement('span');
    span.textContent = text;
    td.appendChild(span);
  }
  return td;
}

for (let n = 4; n <= 46; n++) {
  const tr = tbody.insertRow();
  const th = document.createElement('th');
  th.scope = 'row';
  th.textContent = n;
  tr.appendChild(th);

  if (wide[n]) {
    tr.className = wide[n][0];
    addCell(tr, wide[n][1]).colSpan = COLUMNS;
    continue;
  }

  if (sections[n]) tr.className = 'section';
  if (n === 24) tr.className = 'active-row';

  for (let c = 0; c < COLUMNS; c++) {
    if (n === 33) {
      addCell(tr, sampleHeads[c], 'comment ' + (c >= 3 && c <= 7 ? 'pale' : 'blue'));
    } else if (c === 0 && fields[n]) {
      addCell(tr, fields[n], 'comment blue field-name');
    } else if (c === 0 && sections[n]) {
      addCell(tr, sections[n]);
    } else {
      addCell(tr, '', n === 24 && c === 0 ? 'cursor' : '');
    }
  }
}
```
